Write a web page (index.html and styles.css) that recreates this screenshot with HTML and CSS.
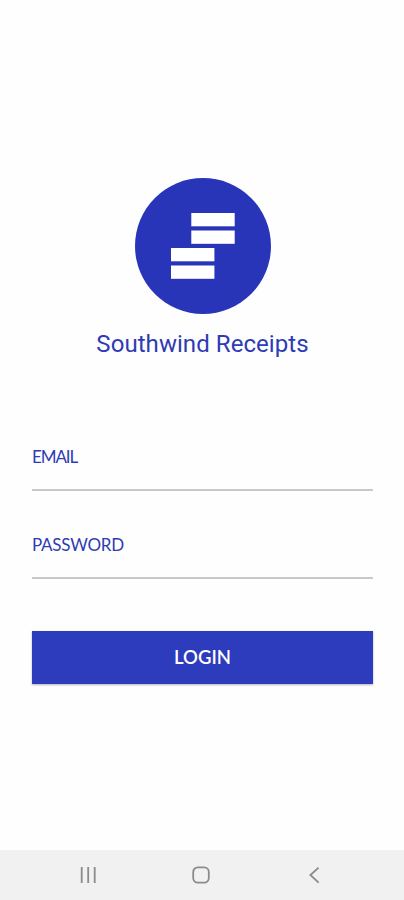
FILE: index.html
```html
<!DOCTYPE html>
<html lang="en">
<head>
  <meta charset="UTF-8" />
  <meta name="viewport" content="width=device-width, initial-scale=1.0"/>
  <title>Southwind Receipts</title>
  <link rel="stylesheet" href="styles.css">
</head>
<body>

  <!-- Login Screen -->
  <main class="login">
    <svg class="logo" viewBox="0 0 136 136" aria-hidden="true">
      <circle cx="68" cy="68" r="68" fill="#2935b8"/>
      <g fill="#fff">
        <rect x="56.3" y="35" width="43.4" height="13.3"/>
        <rect x="56.3" y="52.5" width="43.4" height="13.3"/>
        <rect x="36" y="70" width="43.4" height="13.3"/>
        <rect x="36" y="87.5" width="43.4" height="13.3"/>
      </g>
    </svg>
    <h1>Southwind Receipts</h1>

    <form class="login-form">
      <div class="field">
        <label for="email" class="tight">EMAIL</label>
        <input type="email" id="email">
      </div>
      <div class="field">
        <label for="password">PASSWORD</label>
        <input type="password" id="password">
      </div>
      <button type="button" class="login-btn">LOGIN</button>
    </form>
  </main>

  <!-- System Navigation -->
  <nav class="nav-bar">
    <svg viewBox="0 0 20 20" fill="none" stroke="#8b8b8b" stroke-width="1.8">
      <path d="M3.7 2v16M10.2 2v16M16.7 2v16"/>
    </svg>
    <svg viewBox="0 0 20 20" fill="none" stroke="#8b8b8b" stroke-width="1.8">
      <rect x="2.2" y="2.4" width="15.6" height="15.2" rx="4.6"/>
    </svg>
    <svg viewBox="0 0 20 20" fill="none" stroke="#8b8b8b" stroke-width="1.8">
      <path d="M14.6 2.6L6.4 10l8.2 7.6"/>
    </svg>
  </nav>

</body>
</html>
```
FILE: styles.css
```css
* {
  box-sizing: border-box;
}

body {
  margin: 0;
  height: 100vh;
  display: flex;
  flex-direction: column;
  background-color: #fefefe;
  color: #2e3bb5;
  font-family: Lato, sans-serif;
}

.login {
  flex: 1;
  display: flex;
  flex-direction: column;
  align-items: center;
  padding: 178px 31px 0 32px;
}

.logo {
  width: 136px;
  height: 136px;
}

h1 {
  margin: 16px 0 0;
  font-family: Roboto, sans-serif;
  font-size: 24px;
  font-weight: 400;
  line-height: 28px;
  letter-spacing: 0.06px;
}

.login-form {
  width: 100%;
  margin-top: 87px;
}

.field {
  height: 88px;
}

label {
  display: block;
  height: 24px;
  font-size: 17px;
  line-height: 24px;
  letter-spacing: -0.25px;
}

label.tight {
  letter-spacing: -1.1px;
}

input {
  display: block;
  width: 100%;
  height: 22px;
  padding: 0;
  background: none;
  border: none;
  border-bottom: 2px solid #c8c8c8;
  outline: none;
}

.login-btn {
  display: block;
  width: 100%;
  height: 53px;
  margin-top: 10px;
  padding: 0 0 2px;
  background-color: #2d3bbd;
  border: none;
  box-shadow: 0 1px 2px rgba(0, 0, 0, 0.3);
  color: #fff;
  font-family: Lato, sans-serif;
  font-size: 18.5px;
  font-weight: 600;
}

.nav-bar {
  height: 50px;
  display: flex;
  align-items: center;
  justify-content: space-between;
  padding: 0 80px 0 78px;
  background-color: #f1f1f1;
}

.nav-bar svg {
  width: 20px;
  height: 20px;
}
```
